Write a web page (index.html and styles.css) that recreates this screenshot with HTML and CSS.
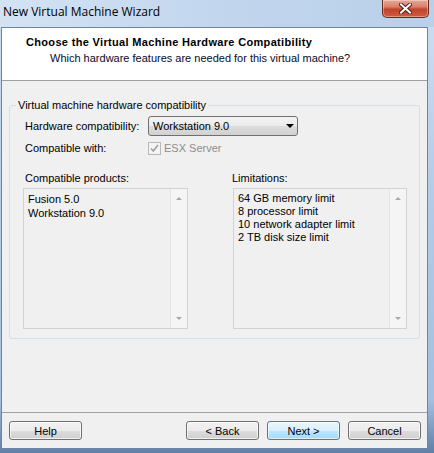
FILE: index.html
```html
<!DOCTYPE html>
<html lang="en">
<head>
    <meta charset="UTF-8">
    <title>New Virtual Machine Wizard</title>
    <link rel="stylesheet" href="styles.css">
</head>
<body>
    <div class="window">
        <div class="titlebar">
            <span class="title">New Virtual Machine Wizard</span>
            <div class="close-btn">
                <svg width="13" height="11" viewBox="0 0 13 11">
                    <path d="M2 1.5 L11 9.5 M11 1.5 L2 9.5" stroke="#4a2018" stroke-width="4" stroke-linecap="square"/>
                    <path d="M2 1.5 L11 9.5 M11 1.5 L2 9.5" stroke="#ffffff" stroke-width="2" stroke-linecap="square"/>
                </svg>
            </div>
        </div>

        <div class="client">
            <header class="wizard-head">
                <h1>Choose the Virtual Machine Hardware Compatibility</h1>
                <p>Which hardware features are needed for this virtual machine?</p>
            </header>

            <main class="wizard-body">
                <fieldset class="group">
                    <legend>Virtual machine hardware compatibility</legend>

                    <div class="field-row">
                        <label class="field-label">Hardware compatibility:</label>
                        <div class="select">
                            <span>Workstation 9.0</span>
                            <span class="select-arrow"></span>
                        </div>
                    </div>

                    <div class="field-row check-row">
                        <label class="field-label">Compatible with:</label>
                        <span class="checkbox">
                            <svg width="13" height="13" viewBox="0 0 13 13">
                                <rect x="0.5" y="0.5" width="12" height="12" fill="#f4f4f4" stroke="#b7b7b7"/>
                                <path d="M3 6.5 L5.3 9 L10 3" fill="none" stroke="#a2a2a2" stroke-width="1.6"/>
                            </svg>
                        </span>
                        <span class="check-label">ESX Server</span>
                    </div>

                    <div class="lists">
                        <div class="list-col products">
                            <div class="list-title">Compatible products:</div>
                            <div class="listbox">
                                <ul>
                                    <li>Fusion 5.0</li>
                                    <li>Workstation 9.0</li>
                                </ul>
                                <div class="scrollbar">
                                    <span class="arrow-up"></span>
                                    <span class="arrow-down"></span>
                                </div>
                            </div>
                        </div>
                        <div class="list-col limits">
                            <div class="list-title">Limitations:</div>
                            <div class="listbox">
                                <ul>
                                    <li>64 GB memory limit</li>
                                    <li>8 processor limit</li>
                                    <li>10 network adapter limit</li>
                                    <li>2 TB disk size limit</li>
                                </ul>
                                <div class="scrollbar">
                                    <span class="arrow-up"></span>
                                    <span class="arrow-down"></span>
                                </div>
                            </div>
                        </div>
                    </div>
                </fieldset>
            </main>

            <footer class="wizard-foot">
                <button class="btn">Help</button>
                <button class="btn push-right">&lt; Back</button>
                <button class="btn btn-default">Next &gt;</button>
                <button class="btn">Cancel</button>
            </footer>
        </div>
    </div>
</body>
</html>
```

FILE: styles.css
```css
* {
    box-sizing: border-box;
    margin: 0;
    padding: 0;
}

body {
    width: 434px;
    height: 453px;
    overflow: hidden;
    font-family: 'Liberation Sans', Arial, sans-serif;
    font-size: 11px;
    line-height: 13px;
    color: #000;
}

.window {
    height: 453px;
    display: flex;
    flex-direction: column;
    background: linear-gradient(to bottom, #bad2eb 0, #cadcf0 26px, #b3cbe7 200px, #a4bfe0 400px, #5f7fa6 100%);
}

/* title bar */
.titlebar {
    height: 27px;
    display: flex;
    align-items: flex-start;
    padding-left: 3px;
    background: linear-gradient(to right, #d3e3f4 0, #c3d7ee 45%, #b9d0ea 100%);
}

.title {
    font-family: 'Open Sans', 'Liberation Sans', sans-serif;
    font-size: 12px;
    line-height: 16px;
    margin-top: 4px;
    color: #000;
}

.close-btn {
    margin-left: auto;
    margin-right: 5px;
    width: 47px;
    height: 18px;
    display: flex;
    align-items: center;
    justify-content: center;
    border: 1px solid #6b2a20;
    border-top: none;
    border-radius: 0 0 5px 5px;
    background: linear-gradient(to bottom, #e9a797 0, #d8806b 40%, #c2432b 55%, #cf5d42 100%);
    box-shadow: inset 0 0 0 1px rgba(255, 255, 255, 0.35);
}

/* client area */
.client {
    flex: 1;
    margin: 0 6px 4px 1px;
    border: 1px solid #6f849e;
    background-color: #f0f0f0;
    display: flex;
    flex-direction: column;
}

.wizard-head {
    height: 53px;
    background-color: #fff;
    border-bottom: 1px solid #a0a0a0;
    padding: 8px 0 0 24px;
}

.wizard-head h1 {
    font-size: 11px;
    font-weight: bold;
    line-height: 13px;
    letter-spacing: 0.33px;
}

.wizard-head p {
    margin-top: 3px;
    padding-left: 24px;
    color: #0a0a2a;
}

.wizard-body {
    flex: 1;
}

/* group box */
.group {
    margin: 18px 7px 0 7px;
    height: 240px;
    border: 1px solid #d5dfe5;
    border-radius: 3px;
    padding: 4px 0 0 15px;
}

.group legend {
    margin-left: -9px;
    padding: 0 2px;
    line-height: 13px;
}

.field-row {
    display: flex;
    align-items: center;
}

.field-label {
    width: 123px;
}

.select {
    width: 150px;
    height: 20px;
    display: flex;
    align-items: center;
    padding-left: 4px;
    border: 1px solid #707070;
    border-radius: 3px;
    background: linear-gradient(to bottom, #f3f3f3 0, #ebebeb 50%, #dddddd 51%, #d1d1d1 100%);
}

.select-arrow {
    margin-left: auto;
    margin-right: 3px;
    width: 0;
    height: 0;
    border-left: 4px solid transparent;
    border-right: 4px solid transparent;
    border-top: 4px solid #000;
}

.check-row {
    margin-top: 6px;
}

.checkbox {
    display: flex;
    width: 13px;
    height: 13px;
}

.check-label {
    margin-left: 3px;
    color: #8d8d8d;
}

/* lists */
.lists {
    display: flex;
    margin-top: 17px;
    margin-left: -2px;
}

.list-title {
    margin-left: 2px;
    margin-bottom: 3px;
}

.products {
    width: 165px;
}

.limits {
    width: 174px;
    margin-left: 45px;
}

.limits .list-title {
    margin-left: -1px;
}

.listbox {
    height: 141px;
    display: flex;
    border: 1px solid #cfd3d7;
    background-color: #f0f0f0;
}

.listbox ul {
    flex: 1;
    list-style-type: none;
    padding: 3px 0 0 4px;
}

.products li {
    line-height: 14px;
}

.scrollbar {
    width: 17px;
    border-left: 1px solid #e3e3e3;
    background-color: #f5f5f5;
    display: flex;
    flex-direction: column;
    justify-content: space-between;
    align-items: center;
    padding: 8px 0 8px;
}

.arrow-up,
.arrow-down {
    width: 0;
    height: 0;
    border-left: 3px solid transparent;
    border-right: 3px solid transparent;
}

.arrow-up {
    border-bottom: 3px solid #a8a8a8;
}

.arrow-down {
    border-top: 3px solid #a8a8a8;
}

/* buttons */
.wizard-foot {
    height: 36px;
    border-top: 1px solid #a0a0a0;
    display: flex;
    align-items: flex-start;
    gap: 8px;
    padding: 8px 6px 0 7px;
}

.push-right {
    margin-left: auto;
}

.btn {
    width: 73px;
    height: 19px;
    font-family: 'Liberation Sans', Arial, sans-serif;
    font-size: 11px;
    color: #000;
    border: 1px solid #707070;
    border-radius: 3px;
    background: linear-gradient(to bottom, #f2f2f2 0, #ebebeb 50%, #dddddd 51%, #cfcfcf 100%);
    box-shadow: inset 0 0 0 1px rgba(255, 255, 255, 0.7);
}

.btn-default {
    border-color: #3c7fb1;
    background: linear-gradient(to bottom, #eaf6fd 0, #d9f0fc 50%, #bee6fd 51%, #a7d9f5 100%);
    box-shadow: inset 0 0 0 1px rgba(255, 255, 255, 0.6);
}
```
